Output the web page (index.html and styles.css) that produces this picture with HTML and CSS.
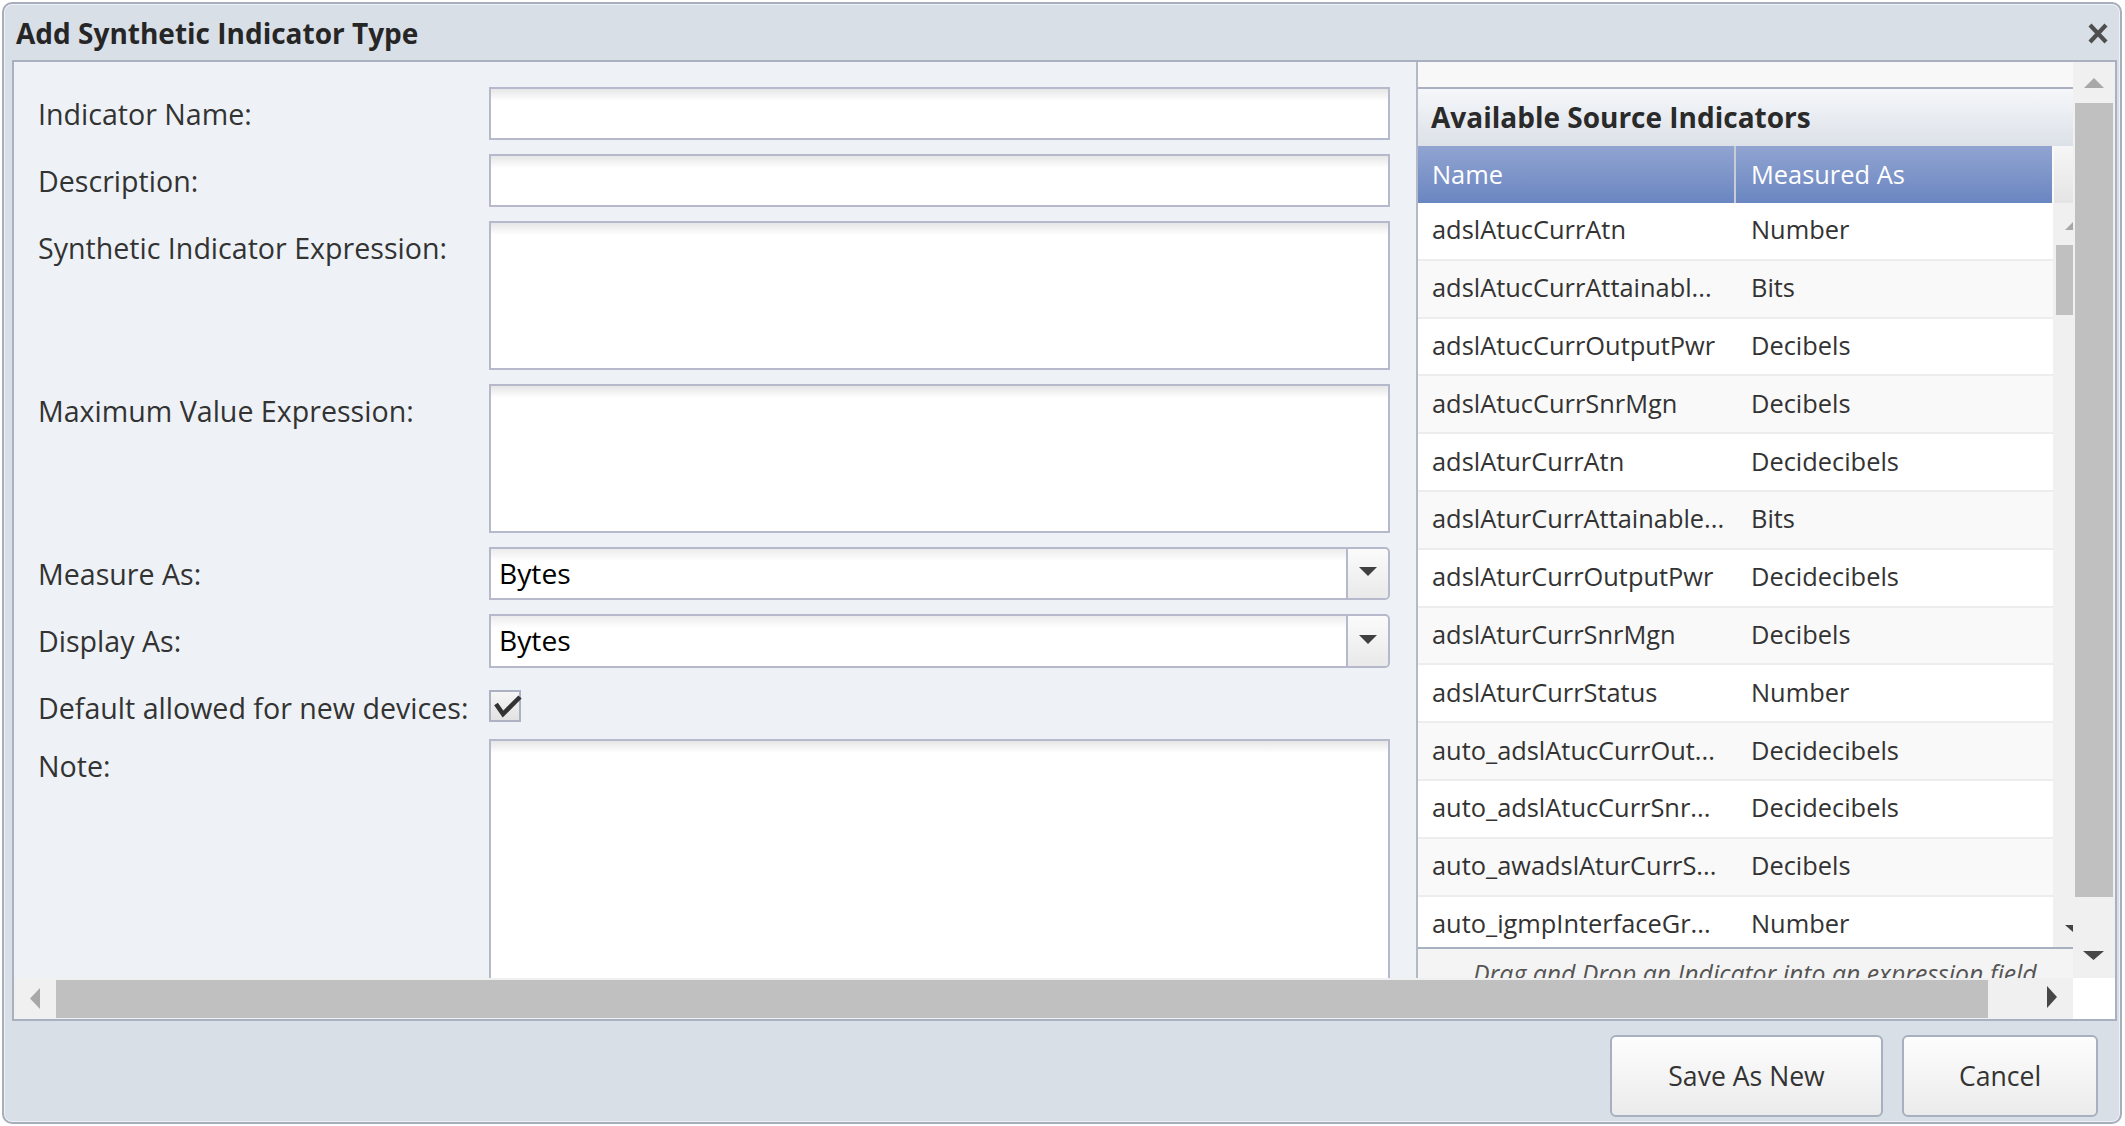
FILE: index.html
```html
<!DOCTYPE html>
<html>
<head>
<meta charset="utf-8">
<title>Add Synthetic Indicator Type</title>
<link rel="stylesheet" href="styles.css">
</head>
<body>
<div class="dialog">
  <div class="titlebar">
    <span class="title">Add Synthetic Indicator Type</span>
    <svg class="close" width="20" height="21" viewBox="0 0 20 21"><path d="M2 2 L18 19 M18 2 L2 19" stroke="#4e4e4e" stroke-width="4.2" fill="none"/></svg>
  </div>
  <div class="content">
    <div class="main">
      <div class="viewport">
        <div class="form">
          <div class="label">Indicator Name:</div>
          <div class="field input"></div>
          <div class="label">Description:</div>
          <div class="field input"></div>
          <div class="label">Synthetic Indicator Expression:</div>
          <div class="field input"></div>
          <div class="label">Maximum Value Expression:</div>
          <div class="field input"></div>
          <div class="label">Measure As:</div>
          <div class="field combo"><span class="combo-value">Bytes</span><span class="combo-btn"><svg width="18" height="9" viewBox="0 0 18 9"><path d="M0 0 H18 L9 9 Z" fill="#404040"/></svg></span></div>
          <div class="label">Display As:</div>
          <div class="field combo"><span class="combo-value">Bytes</span><span class="combo-btn"><svg width="18" height="9" viewBox="0 0 18 9"><path d="M0 0 H18 L9 9 Z" fill="#404040"/></svg></span></div>
          <div class="label label-check">Default allowed for new devices:</div>
          <div class="check-cell"><span class="checkbox"><svg class="tick" width="34" height="30" viewBox="0 0 34 30"><path d="M7 14 L14 24 L31 7" stroke="#333" stroke-width="4.5" fill="none"/></svg></span></div>
          <div class="label">Note:</div>
          <div class="field input note"></div>
        </div>
        <div class="side">
          <div class="side-top"></div>
          <div class="avail">
            <div class="avail-head">Available Source Indicators</div>
            <div class="grid-head">
              <div class="gh-name">Name</div>
              <div class="gh-meas">Measured As</div>
              <div class="gh-fill"></div>
            </div>
            <div class="grid-body">
              <div class="rows">
                <div class="row"><span class="c1">adslAtucCurrAtn</span><span class="c2">Number</span></div>
                <div class="row alt"><span class="c1">adslAtucCurrAttainabl...</span><span class="c2">Bits</span></div>
                <div class="row"><span class="c1">adslAtucCurrOutputPwr</span><span class="c2">Decibels</span></div>
                <div class="row alt"><span class="c1">adslAtucCurrSnrMgn</span><span class="c2">Decibels</span></div>
                <div class="row"><span class="c1">adslAturCurrAtn</span><span class="c2">Decidecibels</span></div>
                <div class="row alt"><span class="c1">adslAturCurrAttainable...</span><span class="c2">Bits</span></div>
                <div class="row"><span class="c1">adslAturCurrOutputPwr</span><span class="c2">Decidecibels</span></div>
                <div class="row alt"><span class="c1">adslAturCurrSnrMgn</span><span class="c2">Decibels</span></div>
                <div class="row"><span class="c1">adslAturCurrStatus</span><span class="c2">Number</span></div>
                <div class="row alt"><span class="c1">auto_adslAtucCurrOut...</span><span class="c2">Decidecibels</span></div>
                <div class="row"><span class="c1">auto_adslAtucCurrSnr...</span><span class="c2">Decidecibels</span></div>
                <div class="row alt"><span class="c1">auto_awadslAturCurrS...</span><span class="c2">Decibels</span></div>
                <div class="row"><span class="c1">auto_igmpInterfaceGr...</span><span class="c2">Number</span></div>
              </div>
              <svg class="inner-scroll" width="20" height="744" viewBox="0 0 20 744">
                <path d="M12 27 H20 V19 Z" fill="#a8a8a8"/>
                <rect x="3" y="42" width="17" height="70" fill="#c0c0c0"/>
                <path d="M12 722 H20 V729 Z" fill="#444"/>
              </svg>
            </div>
            <div class="grid-foot">Drag and Drop an Indicator into an expression field</div>
          </div>
        </div>
      </div>
      <div class="vscroll">
        <div class="vs-up"><svg width="20" height="10" viewBox="0 0 20 10"><path d="M0 10 H20 L10 0 Z" fill="#a8a8a8"/></svg></div>
        <div class="vs-thumb"></div>
        <div class="vs-down"><svg width="21" height="9" viewBox="0 0 21 9"><path d="M0 0 H21 L10.5 9 Z" fill="#474747"/></svg></div>
      </div>
    </div>
    <div class="bottom">
      <div class="hscroll">
        <div class="hs-left"><svg width="10" height="21" viewBox="0 0 10 21"><path d="M10 0 V21 L0 10.5 Z" fill="#a8a8a8"/></svg></div>
        <div class="hs-thumb"></div>
        <div class="hs-right"><svg width="10" height="22" viewBox="0 0 10 22"><path d="M0 0 V22 L10 11 Z" fill="#474747"/></svg></div>
      </div>
      <div class="corner"></div>
    </div>
  </div>
  <div class="footer">
    <button class="btn btn-save">Save As New</button>
    <button class="btn btn-cancel">Cancel</button>
  </div>
</div>
</body>
</html>
```

FILE: styles.css
```css
* { box-sizing: border-box; }
html, body { margin: 0; padding: 0; background: #ffffff; }
body {
  font-family: "Open Sans", "Noto Sans", sans-serif;
  color: #333;
  width: 2125px;
  height: 1126px;
  overflow: hidden;
}
.dialog {
  margin: 2px 0 0 2px;
  width: 2120px;
  height: 1122px;
  border: 2px solid #a7adba;
  border-radius: 10px;
  background: #d9dfe7;
  display: flex;
  flex-direction: column;
  box-shadow: inset 0 0 0 1px #eef1f5;
}
.titlebar {
  height: 56px;
  display: flex;
  align-items: center;
  justify-content: space-between;
  padding: 2px 12px 0 12px;
  flex: none;
}
.title {
  font-weight: 700;
  font-size: 28px;
  color: #262626;
}
.close { display: block; }
.content {
  margin-left: 8px;
  width: 2105px;
  height: 961px;
  flex: none;
  border: 2px solid #a9b0c0;
  background: #eef2f6;
  display: flex;
  flex-direction: column;
}
.main {
  height: 916px;
  display: flex;
  flex: none;
}
.viewport {
  width: 2059px;
  height: 916px;
  overflow: hidden;
  display: flex;
  flex: none;
}
.form {
  width: 1402px;
  flex: none;
  padding: 25px 0 0 24px;
  display: grid;
  grid-template-columns: 451px 901px;
  grid-template-rows: 53px 53px 149px 149px 53px 54px 43px 300px;
  row-gap: 14px;
  align-content: start;
}
.label {
  font-size: 28.6px;
  line-height: 53px;
  color: #333;
  white-space: nowrap;
}
.label-check { line-height: 52px; }
.field {
  border: 2px solid #b5b9cb;
  background: linear-gradient(#e6e6e6, #ffffff 12px);
}
.combo {
  display: flex;
  border-radius: 0 5px 5px 0;
  background: linear-gradient(#ececec, #ffffff 12px);
}
.combo-value {
  flex: 1;
  padding-left: 8px;
  font-size: 28.2px;
  line-height: 49px;
  color: #000;
}
.combo-btn {
  width: 42px;
  border-left: 2px solid #b5b9cb;
  border-radius: 0 4px 4px 0;
  background: linear-gradient(#fbfbfb, #e9e9e9);
  display: flex;
  align-items: center;
  justify-content: center;
  padding-bottom: 4px;
}
.combo-btn svg { display: block; }
.check-cell { padding-top: 8px; }
.checkbox {
  display: block;
  position: relative;
  width: 32px;
  height: 32px;
  border: 2px solid #adb2c3;
  background: linear-gradient(#f6f6f6, #e2e2e2);
}
.tick {
  position: absolute;
  left: -2px;
  top: -2px;
}
.side {
  width: 657px;
  flex: none;
  border-left: 2px solid #b4b9c8;
  background: #f8f8f8;
  display: flex;
  flex-direction: column;
}
.side-top { height: 25px; flex: none; }
.avail {
  border-top: 2px solid #a9b0bf;
  flex: 1;
  display: flex;
  flex-direction: column;
}
.avail-head {
  height: 57px;
  flex: none;
  padding-left: 13px;
  font-weight: 700;
  font-size: 28px;
  line-height: 57px;
  color: #2a2a2a;
  background: linear-gradient(#f5f7fa, #dce1e8);
}
.grid-head {
  height: 57px;
  flex: none;
  display: flex;
  font-size: 25.4px;
  line-height: 57px;
  color: #ffffff;
}
.gh-name {
  width: 318px;
  padding-left: 14px;
  border-right: 2px solid #c9ccd4;
  background: linear-gradient(#91a4d1, #6a86c1);
}
.gh-meas {
  width: 316px;
  padding-left: 15px;
  background: linear-gradient(#91a4d1, #6a86c1);
}
.gh-fill {
  flex: 1;
  border-left: 2px solid #fafafa;
  background: linear-gradient(#f6f6f6, #e4e4e4);
}
.grid-body {
  height: 744px;
  flex: none;
  display: flex;
  overflow: hidden;
  background: #ffffff;
}
.rows { width: 635px; flex: none; }
.row {
  height: 57.8px;
  display: flex;
  align-items: center;
  padding-bottom: 3px;
  border-bottom: 2px solid #ededed;
  background: #ffffff;
  font-size: 25.4px;
  color: #333;
  white-space: nowrap;
}
.row.alt { background: #f9f9f9; }
.c1 {
  width: 318px;
  padding-left: 14px;
  overflow: hidden;
}
.c2 { padding-left: 15px; }
.inner-scroll {
  display: block;
  flex: none;
  background: #f0f0f0;
}
.grid-foot {
  border-top: 2px solid #a9b0bf;
  background: #f4f4f4;
  height: 60px;
  flex: none;
  padding: 9px 0 0 55px;
  font-style: italic;
  font-size: 24.8px;
  line-height: 30px;
  color: #555;
  white-space: nowrap;
}
.vscroll {
  width: 42px;
  flex: none;
  background: #f0f0f0;
  display: flex;
  flex-direction: column;
}
.vs-up {
  height: 41px;
  flex: none;
  padding: 16px 0 0 11px;
}
.vs-up svg, .vs-down svg, .hs-left svg, .hs-right svg { display: block; }
.vs-thumb {
  height: 794px;
  flex: none;
  margin: 0 2px;
  background: #c0c0c0;
}
.vs-down {
  flex: 1;
  padding: 54px 0 0 10px;
}
.bottom {
  height: 41px;
  flex: none;
  display: flex;
}
.hscroll {
  width: 2059px;
  flex: none;
  background: #f0f0f0;
  display: flex;
}
.hs-left {
  width: 42px;
  flex: none;
  padding: 10px 0 0 16px;
}
.hs-thumb {
  width: 1932px;
  flex: none;
  margin: 2px 0 1px;
  background: #c0c0c0;
}
.hs-right {
  flex: 1;
  padding: 8px 0 0 59px;
}
.corner {
  flex: 1;
  background: #ffffff;
}
.footer {
  flex: 1;
  display: flex;
  justify-content: flex-end;
  align-items: flex-start;
  gap: 19px;
  padding: 14px 22px 0 0;
}
.btn {
  height: 82px;
  border: 2px solid #a8afbf;
  border-radius: 6px;
  background: linear-gradient(#fdfdfd, #ebebeb);
  font-family: "Open Sans", "Noto Sans", sans-serif;
  font-size: 26.6px;
  color: #333;
  padding: 0;
}
.btn-save { width: 273px; }
.btn-cancel { width: 196px; }
```
